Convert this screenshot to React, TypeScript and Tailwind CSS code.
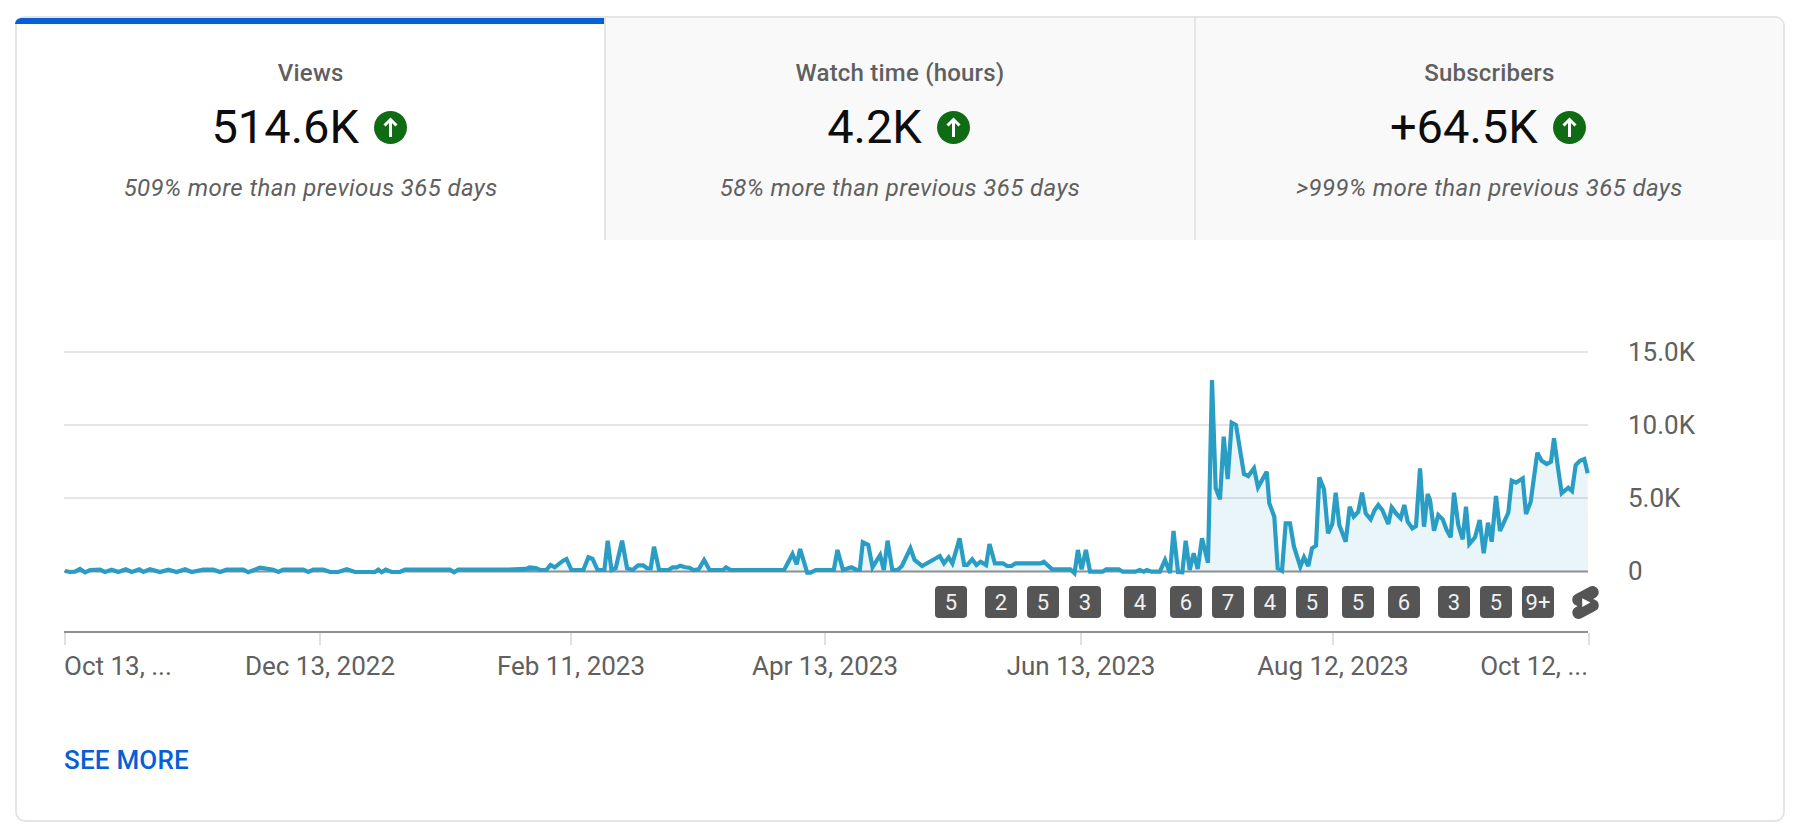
import { SiYoutubeshorts } from "react-icons/si";

type Pt = [number, number];

// traced from the channel analytics chart, page pixel coords
const flat: Pt[] = [
  [75, 213], [90, 216], [105, 215], [120, 207], [135, 217], [150, 210], [180, 209], [195, 216], [215, 209], [235, 216],
  [257, 208], [275, 216], [298, 208], [310, 216], [330, 208], [360, 216], [385, 209], [410, 216], [435, 208], [455, 216],
  [490, 209], [520, 209], [540, 216], [560, 209], [610, 209], [625, 217], [660, 203], [700, 209], [715, 216], [730, 209],
  [790, 209], [805, 216], [820, 209], [850, 209], [870, 216], [895, 216], [920, 208], [945, 216], [1005, 216], [1015, 209],
  [1025, 217], [1037, 209], [1055, 216], [1080, 216], [1095, 209], [1230, 209], [1242, 217], [1255, 209], [1450, 209],
  [1470, 203], [1490, 205],
];

const middle: Pt[] = [
  [0, 270], [60, 268], [70, 262], [85, 264], [95, 270], [110, 270], [120, 255], [130, 262], [150, 242], [158, 237],
  [170, 270], [198, 270], [210, 232], [220, 237], [232, 270], [248, 270], [256, 182], [265, 270], [275, 265], [290, 182],
  [302, 265], [315, 270], [328, 256], [340, 256], [350, 265], [358, 265], [366, 200], [378, 270], [400, 270], [410, 262],
  [420, 262], [428, 257], [440, 262], [450, 263], [460, 270], [472, 268], [485, 240], [498, 270], [530, 270], [537, 262],
  [548, 270], [675, 270], [695, 222], [705, 253], [713, 207], [730, 278], [738, 278], [750, 270], [793, 270], [802, 210],
  [815, 270], [835, 262], [848, 270], [855, 270], [862, 187], [875, 195], [885, 262], [903, 225], [912, 270], [921, 182],
  [932, 270], [945, 270], [955, 258], [975, 205], [985, 240], [1003, 258], [1045, 228], [1055, 250], [1066, 232], [1075, 250],
  [1092, 175], [1103, 255], [1110, 255], [1122, 238], [1132, 255], [1142, 245], [1155, 255], [1163, 192], [1176, 250], [1195, 250],
  [1205, 258], [1215, 258], [1225, 250], [1285, 250], [1292, 245], [1312, 268], [1355, 268], [1365, 280], [1373, 210], [1382, 268],
  [1392, 210], [1402, 275], [1432, 275], [1440, 268], [1470, 268], [1480, 275], [1510, 275], [1520, 270], [1530, 275], [1537, 270],
  [1548, 275], [1568, 275],
];

const spike: Pt[] = [
  [7, 607], [17, 512], [29, 600], [41, 550], [53, 597], [66, 505], [84, 578], [96, 30], [107, 355], [120, 388],
  [131, 200], [143, 327], [155, 158], [168, 165], [192, 312], [205, 318], [222, 295], [234, 352], [260, 305], [268, 400],
  [283, 440], [293, 595], [306, 602], [317, 460], [330, 460], [342, 530], [361, 590], [372, 562], [385, 588], [396, 535],
  [408, 527], [418, 322], [432, 358], [444, 490], [457, 462], [467, 368], [478, 465], [497, 515], [509, 410], [521, 440],
  [535, 425], [546, 368], [557, 430], [572, 448], [584, 420], [595, 405], [607, 420], [625, 462],
];

const tail: Pt[] = [
  [5, 262], [18, 280], [32, 295], [43, 255], [53, 305], [67, 325], [78, 318], [90, 145], [102, 320], [113, 222],
  [120, 240], [132, 332], [145, 285], [158, 298], [170, 330], [182, 352], [192, 218], [205, 315], [218, 358], [228, 260],
  [238, 372], [255, 352], [269, 300], [281, 400], [294, 308], [305, 365], [318, 228], [330, 333], [355, 278], [365, 182],
  [378, 188], [398, 175], [408, 282], [422, 245], [442, 98], [455, 122], [470, 132], [483, 125], [492, 55], [505, 150],
  [515, 220], [535, 203], [546, 213], [557, 135], [570, 122], [583, 117], [593, 160],
];

const line: Pt[] = [
  ...flat.map(([x, y]): Pt => [40 + x / 3, 500 + y / 3]),
  ...middle.map(([x, y]): Pt => [500 + x / 2.376, 480 + y / 3]),
  [1165, 560], [1170, 573], [1173.5, 531], [1178, 572],
  ...spike.map(([x, y]): Pt => [1180 + x / 3, 370 + y / 3]),
  ...tail.map(([x, y]): Pt => [1390 + x / 3, 420 + y / 3]),
];

const linePoints = line.map(([x, y]) => `${x.toFixed(1)},${y.toFixed(1)}`).join(" ");
const areaPoints = `64,571.5 ${linePoints} 1588,571.5`;

const tabs = [
  { title: "Views", value: "514.6K", note: "509% more than previous 365 days", active: true, last: false },
  { title: "Watch time (hours)", value: "4.2K", note: "58% more than previous 365 days", active: false, last: false },
  { title: "Subscribers", value: "+64.5K", note: ">999% more than previous 365 days", active: false, last: true },
];

const badges = [
  { n: "5", x: 935 }, { n: "2", x: 985 }, { n: "5", x: 1027 }, { n: "3", x: 1069 }, { n: "4", x: 1124 },
  { n: "6", x: 1170 }, { n: "7", x: 1212 }, { n: "4", x: 1254 }, { n: "5", x: 1296 }, { n: "5", x: 1342 },
  { n: "6", x: 1388 }, { n: "3", x: 1438 }, { n: "5", x: 1480 }, { n: "9+", x: 1522 },
];

const ticks = [64, 319, 570, 824, 1080, 1332, 1588];

const labels = [
  { x: 64, label: "Oct 13, ...", cls: "justify-start" },
  { x: 320, label: "Dec 13, 2022", cls: "justify-center" },
  { x: 571, label: "Feb 11, 2023", cls: "justify-center" },
  { x: 825, label: "Apr 13, 2023", cls: "justify-center" },
  { x: 1081, label: "Jun 13, 2023", cls: "justify-center" },
  { x: 1333, label: "Aug 12, 2023", cls: "justify-center" },
  { x: 1588, label: "Oct 12, ...", cls: "justify-end" },
];

function UpBadge() {
  return (
    <svg viewBox="0 0 33 33" className="w-[33px] h-[33px] shrink-0">
      <circle cx="16.5" cy="16.5" r="16.5" fill="#106c14" />
      <path d="M16.5 26V9M10.5 14.5L16.5 8.5L22.5 14.5" fill="none" stroke="#fff" strokeWidth="3" />
    </svg>
  );
}

function Tab({ title, value, note, active, last }: { title: string; value: string; note: string; active: boolean; last: boolean }) {
  return (
    <div
      className={
        active
          ? "w-[588px] h-[222px] bg-white"
          : last
            ? "w-[590px] h-[222px] bg-[#f9f9f9] border-l-2 border-[#e5e5e5] rounded-tr-[8px]"
            : "w-[590px] h-[222px] bg-[#f9f9f9] border-l-2 border-[#e5e5e5]"
      }
    >
      <div className={active ? "h-[6px] -ml-[2px] rounded-tl-[8px] bg-[#065fd4]" : "h-[6px]"} />
      <div className="flex flex-col items-center pt-[35px]">
        <div className="text-[24px] leading-[28px] font-medium text-[#606060] tracking-[0.2px]">{title}</div>
        <div className="flex items-center gap-[15px] mt-[13px] h-[54px] mr-[3px]">
          <span className="text-[47px] leading-[54px] text-[#0d0d0d]">{value}</span>
          <UpBadge />
        </div>
        <div className="mt-[18px] text-[24px] leading-[32px] italic text-[#606060] tracking-[0.4px]">{note}</div>
      </div>
    </div>
  );
}

export default function App() {
  return (
    <div className="w-[1802px] h-[832px] bg-white pt-[16px] pl-[15px] font-['Roboto',sans-serif]">
      <div className="w-[1770px] h-[806px] border-2 border-[#e5e5e5] rounded-[10px] bg-white">
        <div className="flex">
          {tabs.map((t) => (
            <Tab key={t.title} {...t} />
          ))}
        </div>

        <div className="pl-[47px] pt-[75px]">
          <div className="flex h-[265px]">
            <svg viewBox="64 315 1524 265" className="w-[1524px] h-[265px] shrink-0 overflow-visible">
              {[352, 425, 498].map((y) => (
                <line key={y} x1="64" x2="1588" y1={y} y2={y} stroke="#e5e5e5" strokeWidth="2" />
              ))}
              <polygon points={areaPoints} fill="#2a9dc4" fillOpacity="0.1" />
              <line x1="64" x2="1588" y1="571.5" y2="571.5" stroke="#909090" strokeWidth="2" />
              <polyline points={linePoints} fill="none" stroke="#2a9dc4" strokeWidth="4.2" strokeLinejoin="miter" strokeMiterlimit="3" />
            </svg>
            <div className="pl-[40px] pt-[0.5px] shrink-0">
              {["15.0K", "10.0K", "5.0K", "0"].map((l) => (
                <div key={l} className="h-[73px] flex items-center text-[26px] text-[#606060]">
                  {l}
                </div>
              ))}
            </div>
          </div>

          <div className="flex items-center h-[32px] mt-[6px] w-[1524px]">
            {badges.map((b, i) => (
              <div
                key={b.x}
                style={{ marginLeft: b.x - (i === 0 ? 64 : badges[i - 1].x + 32) }}
                className="w-[32px] h-[32px] shrink-0 rounded-[4px] bg-[#555555] text-[#f1f1f1] text-[22px] flex items-center justify-center"
              >
                {b.n}
              </div>
            ))}
            <SiYoutubeshorts className="w-[33px] h-[33px] shrink-0 ml-[15px] text-[#555555]" />
          </div>

          <div className="w-[1524px] h-[2px] mt-[13px] bg-[#909090]" />

          <div className="flex w-[1524px] h-[12px]">
            {ticks.map((x, i) => (
              <div
                key={x}
                style={{ marginLeft: i === 0 ? 0 : x - ticks[i - 1] - 2 }}
                className="w-[2px] h-[12px] shrink-0 bg-[#e0e0e0]"
              />
            ))}
          </div>

          <div className="flex w-[1524px] h-[40px] mt-[1px]">
            {labels.map((t, i) => (
              <div
                key={t.x}
                style={{ marginLeft: i === 0 ? 0 : t.x - labels[i - 1].x }}
                className={`w-0 flex ${t.cls} items-center text-[26px] text-[#606060] whitespace-nowrap`}
              >
                {t.label}
              </div>
            ))}
          </div>

          <div className="mt-[58px] text-[26px] leading-[32px] font-medium text-[#065fd4] tracking-[0.2px]">SEE MORE</div>
        </div>
      </div>
    </div>
  );
}
